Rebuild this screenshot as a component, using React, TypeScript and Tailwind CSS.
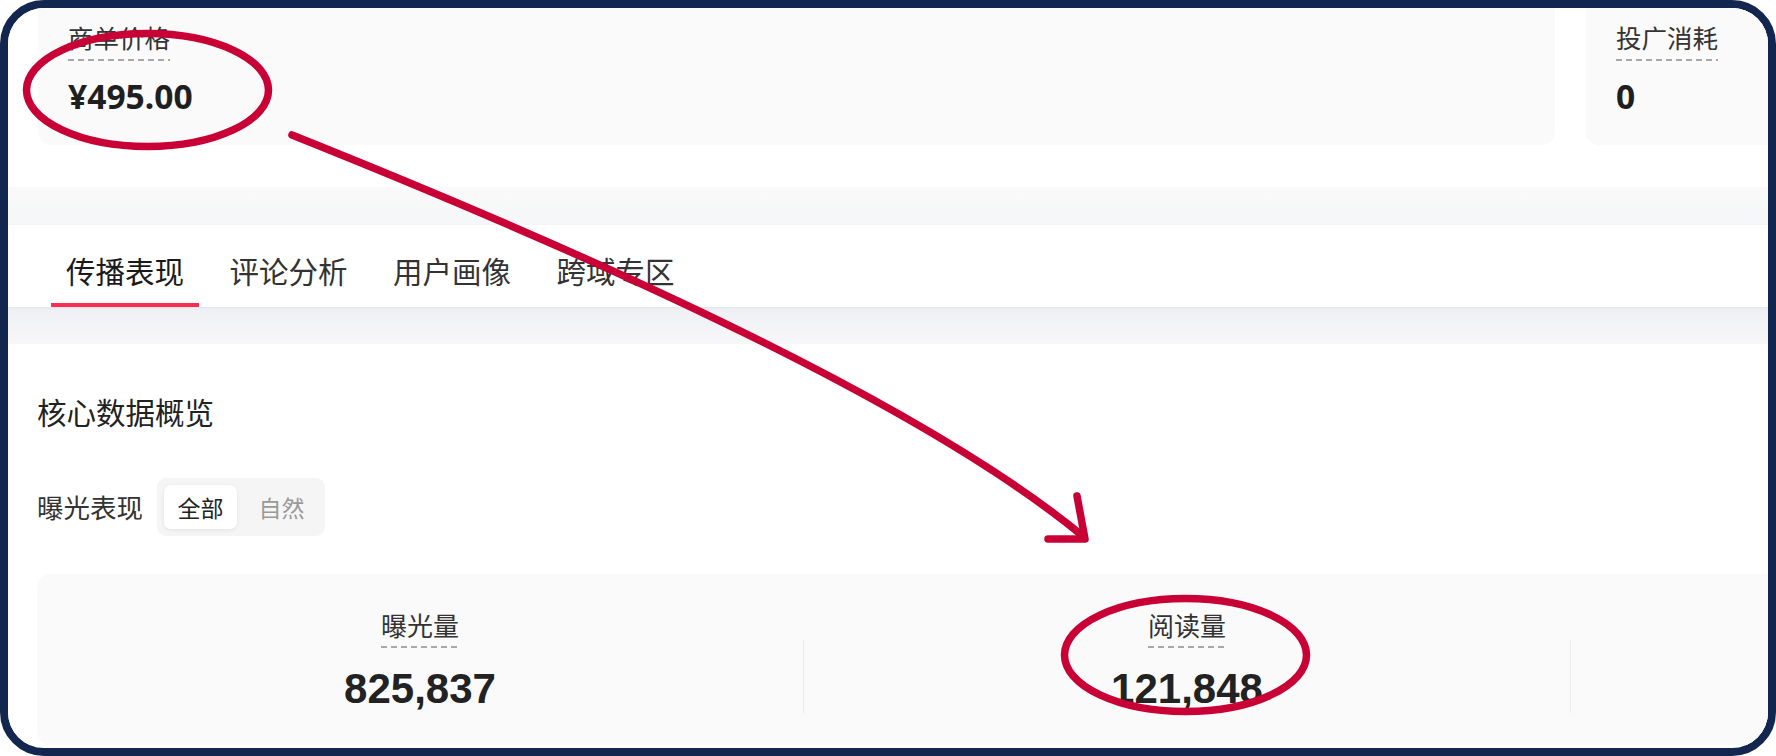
import React from 'react';

interface MetricCardProps {
  label: string;
  value: string;
  className?: string;
}

// label with the dashed hint line under it
const HintLabel: React.FC<{ text: string; className?: string }> = ({ text, className }) => (
  <span className={`inline-flex flex-col leading-[32px] text-[#333] ${className ?? ''}`}>
    <span>{text}</span>
    <span className="h-[2px] bg-[repeating-linear-gradient(90deg,#a8a8a8_0_6px,transparent_6px_10px)]" />
  </span>
);

const MetricCard: React.FC<MetricCardProps> = ({ label, value, className }) => (
  <div className={`shrink-0 flex flex-col items-start bg-[#fafafa] rounded-[13px] pt-[33px] pl-[30px] pb-[29px] ${className ?? ''}`}>
    <HintLabel text={label} className="text-[25.5px] gap-[6px]" />
    <span className="mt-[15px] text-[33.6px] leading-[40px] font-bold text-[#1f1f1f] font-['Noto_Sans',sans-serif]">
      {value}
    </span>
  </div>
);

const tabs = ['传播表现', '评论分析', '用户画像', '跨域专区'];

const stats = [
  { label: '曝光量', value: '825,837' },
  { label: '阅读量', value: '121,848' },
  { label: '', value: '' },
];

// red marker drawn over the screenshot
const Annotations = () => (
  <svg
    className="absolute inset-0 z-20 pointer-events-none"
    width="1776"
    height="756"
    viewBox="0 0 1776 756"
    fill="none"
  >
    <g stroke="#c90035" strokeWidth="7.5" strokeLinecap="round" strokeLinejoin="round">
      <ellipse cx="147.5" cy="90" rx="121" ry="56.5" />
      <ellipse cx="1185.5" cy="655" rx="121" ry="56.5" />
      <path d="M292 135 Q885 372 1084 537" />
      <path d="M1077 496 L1085 539 L1048 539" />
    </g>
  </svg>
);

export default function App() {
  const [tab, setTab] = React.useState(0);
  const [mode, setMode] = React.useState<'all' | 'natural'>('all');

  return (
    <div className="relative w-[1776px] h-[756px] bg-white overflow-hidden font-['Noto_Sans_CJK_SC','Noto_Sans',sans-serif]">
      <div className="h-full rounded-[44px] border-[8px] border-[#13264f] overflow-hidden bg-white">
        {/* order info */}
        <section className="bg-white pb-[42px]">
          <div className="flex gap-[31px] -mt-[20px] pl-[30px]">
            <MetricCard className="w-[1517px]" label="商单价格" value="¥495.00" />
            <MetricCard className="w-[420px]" label="投广消耗" value="0" />
          </div>
        </section>

        <div className="h-[38px] bg-gradient-to-b from-[#fafafa] to-[#f5f6f8]" />

        <nav className="relative z-10 h-[82px] bg-white flex gap-[15.5px] pl-[43px] shadow-[0_1px_3px_rgba(0,0,0,0.05)]">
          {tabs.map((t, i) => (
            <div key={t} onClick={() => setTab(i)} className="flex flex-col cursor-pointer">
              <span className={`px-[15px] pt-[25px] text-[29.5px] leading-[40px] ${i === tab ? 'text-[#1a1a1a]' : 'text-[#333]'}`}>
                {t}
              </span>
              <span className={`mt-[13px] h-[4px] ${i === tab ? 'bg-[#fe2c55]' : 'bg-transparent'}`} />
            </div>
          ))}
        </nav>

        <div className="h-[37px] bg-gradient-to-b from-[#eff0f5] to-[#f7f7f8]" />

        <section className="bg-white pl-[29px] pt-[47px]">
          <h3 className="text-[29.5px] leading-[40px] text-[#222]">核心数据概览</h3>

          <div className="mt-[47px] h-[58px] flex items-center">
            <span className="text-[26.5px] leading-[36px] text-[#333]">曝光表现</span>
            <div className="ml-[14px] flex gap-[8px] p-[7px] bg-[#f5f5f5] rounded-[9px]">
              <div
                onClick={() => setMode('all')}
                className={`w-[73px] h-[44px] flex items-center justify-center rounded-[7px] text-[23px] cursor-pointer ${mode === 'all' ? 'bg-white text-[#222] shadow-[0_1px_4px_rgba(0,0,0,0.08)]' : 'text-[#999]'}`}
              >
                全部
              </div>
              <div
                onClick={() => setMode('natural')}
                className={`w-[73px] h-[44px] flex items-center justify-center rounded-[7px] text-[23px] cursor-pointer ${mode === 'natural' ? 'bg-white text-[#222] shadow-[0_1px_4px_rgba(0,0,0,0.08)]' : 'text-[#999]'}`}
              >
                自然
              </div>
            </div>
          </div>

          <div className="mt-[38px] w-[2400px] bg-[#fafafa] rounded-[13px] flex items-end pt-[35px] pb-[32px]">
            {stats.map((s, i) => (
              <React.Fragment key={i}>
                {i > 0 && <div className="w-px h-[73px] bg-[#ebebeb] shrink-0" />}
                <div className="w-[766px] shrink-0 flex flex-col items-center">
                  {s.label && (
                    <>
                      <HintLabel text={s.label} className="text-[26px] gap-[5px]" />
                      <span className="mt-[17px] text-[42px] leading-[48px] font-bold text-[#222] font-['Liberation_Sans',sans-serif]">
                        {s.value}
                      </span>
                    </>
                  )}
                </div>
              </React.Fragment>
            ))}
          </div>
        </section>
      </div>
      <Annotations />
    </div>
  );
}
